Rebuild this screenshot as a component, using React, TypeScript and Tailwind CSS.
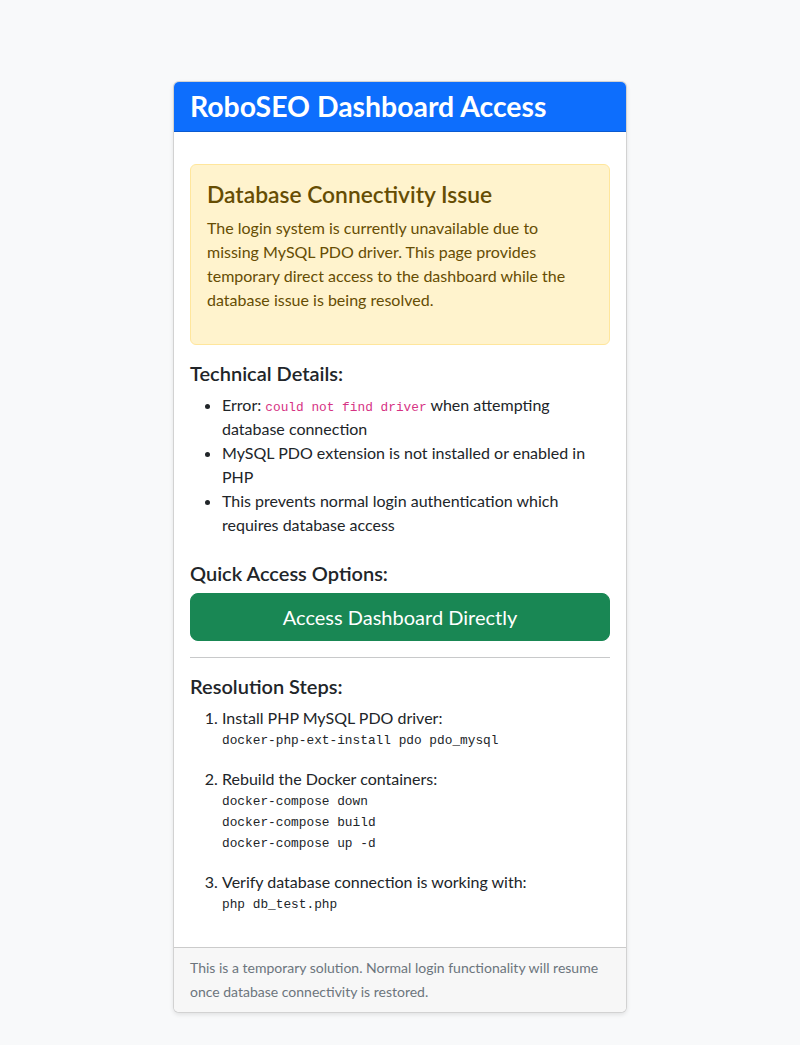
const mono = "font-['Liberation_Mono',monospace] text-[12.8px]";

const Code = ({ children }: { children: string }) => (
  <pre className={`${mono} leading-[21px] text-[#212529] mb-4 whitespace-pre`}>{children}</pre>
);

export default function App() {
  return (
    <div className="min-h-screen bg-[#f8f9fa] font-['Lato',sans-serif] text-[16px] leading-6 text-[#212529] pt-[81px] pb-8">
      <div className="w-[454px] mx-auto bg-white border border-[rgba(0,0,0,0.175)] rounded-[6px] shadow-[0_2px_4px_rgba(0,0,0,0.09)] overflow-hidden">
        <div className="bg-[#0d6efd] px-4 pt-[7px] pb-2 border-b border-[rgba(0,0,0,0.175)]">
          <h2 className="text-white text-[28.4px] leading-[34px] font-bold">RoboSEO Dashboard Access</h2>
        </div>

        <div className="px-4 pt-8 pb-4">
          <div className="bg-[#fff3cd] border border-[#ffe69c] rounded-[6px] p-4 text-[#664d03] mb-4">
            <h4 className="text-[22.8px] leading-[27px] font-semibold mb-2">Database Connectivity Issue</h4>
            <p className="mb-4">
              The login system is currently unavailable due to missing MySQL PDO driver. This page provides
              temporary direct access to the dashboard while the database issue is being resolved.
            </p>
          </div>

          <h5 className="text-[20px] leading-6 font-semibold mb-2">Technical Details:</h5>
          <ul className="list-disc pl-8 mb-4">
            <li>
              Error: <code className={`${mono} leading-none text-[#d63384]`}>could not find driver</code> when
              attempting database connection
            </li>
            <li>MySQL PDO extension is not installed or enabled in PHP</li>
            <li>This prevents normal login authentication which requires database access</li>
          </ul>

          <div className="mt-6">
            <h5 className="text-[20px] leading-6 font-semibold mb-2">Quick Access Options:</h5>
            <button className="w-full bg-[#198754] text-white text-[20px] leading-[30px] py-2 px-4 rounded-[8px] border border-[#198754]">
              Access Dashboard Directly
            </button>
          </div>

          <hr className="my-4 border-t border-[#c8c9ca]" />

          <h5 className="text-[20px] leading-6 font-semibold mb-2">Resolution Steps:</h5>
          <ol className="list-decimal pl-8">
            <li>
              Install PHP MySQL PDO driver:
              <Code>docker-php-ext-install pdo pdo_mysql</Code>
            </li>
            <li>
              Rebuild the Docker containers:
              <Code>{"docker-compose down\ndocker-compose build\ndocker-compose up -d"}</Code>
            </li>
            <li>
              Verify database connection is working with:
              <Code>php db_test.php</Code>
            </li>
          </ol>
        </div>

        <div className="bg-[#f7f7f7] border-t border-[rgba(0,0,0,0.175)] px-4 py-2">
          <p className="text-[#6c757d] text-[14px] leading-6">
            This is a temporary solution. Normal login functionality will resume once database connectivity is
            restored.
          </p>
        </div>
      </div>
    </div>
  );
}
